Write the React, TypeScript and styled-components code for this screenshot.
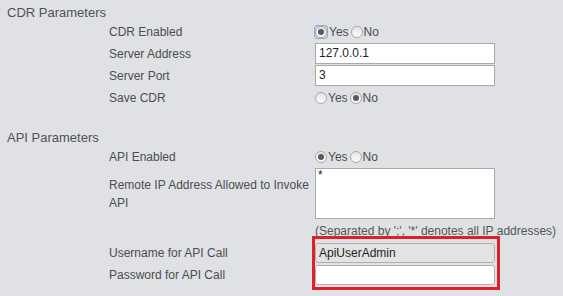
import React from 'react';
import styled, { createGlobalStyle } from 'styled-components';

const GlobalStyle = createGlobalStyle`
  html, body {
    margin: 0;
    padding: 0;
    background: #dfe1e5;
  }
  body {
    font-family: "Liberation Sans", Arial, sans-serif;
    font-size: 12px;
    color: #4d4d4d;
  }
`;

const Page = styled.div`
  width: 563px;
  height: 296px;
  overflow: hidden;
  padding-left: 7px;
  box-sizing: border-box;
`;

const Heading = styled.div<{ $top: number }>`
  height: 20px;
  line-height: 24px;
  font-size: 13px;
  margin-top: ${({ $top }) => $top}px;
  color: #525252;
`;

const Grid = styled.div`
  display: grid;
  grid-template-columns: 206px 1fr;
  margin-left: 102px;
  row-gap: 1px;
`;

const Label = styled.div`
  display: flex;
  align-items: center;
  min-height: 21px;
  line-height: 18px;
  white-space: nowrap;
`;

const WrapLabel = styled(Label)`
  white-space: normal;
`;

const Cell = styled.div`
  display: flex;
  align-items: center;
  min-height: 21px;
`;

const RadioGroup = styled.div`
  display: flex;
  align-items: center;
`;

const FocusBox = styled.span`
  display: inline-flex;
  border-radius: 2px;
  outline: 1px solid #88a9d9;
  background: rgba(160, 190, 235, 0.35);
  margin-right: 1px;
`;

const RadioMark = styled.span<{ $checked?: boolean }>`
  position: relative;
  display: inline-block;
  width: 12px;
  height: 12px;
  border-radius: 50%;
  border: 1px solid #a8a8a8;
  background: linear-gradient(#e4e4e4, #fdfdfd);
  box-sizing: border-box;

  &::after {
    content: '';
    display: ${({ $checked }) => ($checked ? 'block' : 'none')};
    position: absolute;
    left: 2px;
    top: 2px;
    width: 6px;
    height: 6px;
    border-radius: 50%;
    background: #595959;
  }
`;

const RadioText = styled.span`
  margin: 0 2px 0 1px;
`;

const TextInput = styled.div<{ $rounded?: boolean; $grey?: boolean }>`
  width: 180px;
  height: ${({ $rounded }) => ($rounded ? 20 : 21)}px;
  box-sizing: border-box;
  border: 1px solid ${({ $rounded }) => ($rounded ? '#b0b0b0' : '#a9a9a9')};
  border-radius: ${({ $rounded }) => ($rounded ? 3 : 0)}px;
  background: ${({ $grey }) => ($grey ? '#e3e3e3' : '#fff')};
  padding: 0 3px;
  line-height: ${({ $rounded }) => ($rounded ? 18 : 19)}px;
  color: #1f1f1f;
  font-size: 12px;
`;

const TextArea = styled.div`
  width: 180px;
  height: 51px;
  box-sizing: border-box;
  border: 1px solid #a9a9a9;
  background: #fff;
  padding: 0 2px;
  line-height: 13px;
  color: #222;
`;

const Hint = styled(Cell)`
  white-space: nowrap;
  color: #555;
`;

const Highlight = styled.div`
  grid-column: 2;
  grid-row: 4 / span 2;
  justify-self: start;
  display: flex;
  flex-direction: column;
  gap: 2px;
  margin: -6px 0 -5px -3px;
  padding: 4px 2px 2px 0;
  border: 3px solid #e31e2b;
`;

const Radio = ({ value, focus }: { value: 'yes' | 'no'; focus?: boolean }) => (
  <RadioGroup>
    {focus ? (
      <FocusBox>
        <RadioMark $checked={value === 'yes'} />
      </FocusBox>
    ) : (
      <RadioMark $checked={value === 'yes'} />
    )}
    <RadioText>Yes</RadioText>
    <RadioMark $checked={value === 'no'} />
    <RadioText>No</RadioText>
  </RadioGroup>
);

export default function App() {
  return (
    <Page>
      <GlobalStyle />
      <Heading $top={1}>CDR Parameters</Heading>
      <Grid>
        <Label>CDR Enabled</Label>
        <Cell>
          <Radio value="yes" focus />
        </Cell>
        <Label>Server Address</Label>
        <Cell>
          <TextInput>127.0.0.1</TextInput>
        </Cell>
        <Label>Server Port</Label>
        <Cell>
          <TextInput>3</TextInput>
        </Cell>
        <Label>Save CDR</Label>
        <Cell>
          <Radio value="no" />
        </Cell>
      </Grid>

      <Heading $top={18}>API Parameters</Heading>
      <Grid>
        <Label>API Enabled</Label>
        <Cell>
          <Radio value="yes" />
        </Cell>
        <WrapLabel>Remote IP Address Allowed to Invoke API</WrapLabel>
        <Cell>
          <TextArea>*</TextArea>
        </Cell>
        <div />
        <Hint>(Separated by ';', '*' denotes all IP addresses)</Hint>
        <Label>Username for API Call</Label>
        <Highlight>
          <TextInput $rounded $grey>ApiUserAdmin</TextInput>
          <TextInput $rounded />
        </Highlight>
        <Label>Password for API Call</Label>
      </Grid>
    </Page>
  );
}
